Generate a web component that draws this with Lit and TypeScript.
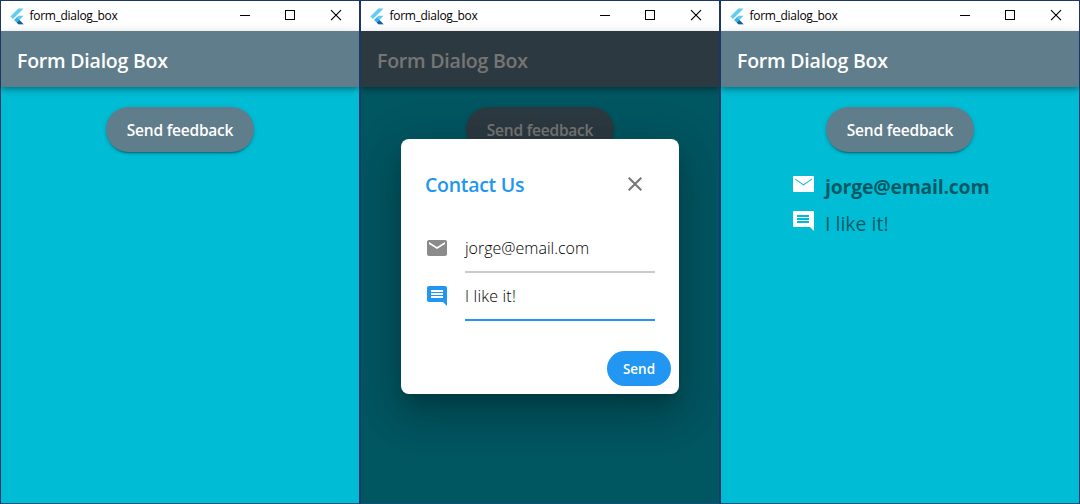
import { LitElement, html, css, svg, nothing } from "lit";
import { customElement, property } from "lit/decorators.js";

const MAIL = "M20 4H4c-1.1 0-1.99.9-1.99 2L2 18c0 1.1.9 2 2 2h16c1.1 0 2-.9 2-2V6c0-1.1-.9-2-2-2zm0 4l-8 5-8-5V6l8 5 8-5v2z";
const MAIL_SHARP = "M22 4H3Q2 4 2 5V19Q2 20 3 20H22Q23 20 23 19V5Q23 4 22 4zM21 7.6L12.5 13.6 4 7.6V6.4L12.5 12.3 21 6.4z";
const COMMENT = "M21.99 4c0-1.1-.89-2-1.99-2H4c-1.1 0-2 .9-2 2v12c0 1.1.9 2 2 2h14l4 4-.01-18zM18 14H6v-2h12v2zm0-3H6V9h12v2zm0-3H6V6h12v2z";
const COMMENT_SHARP = "M22 2H3Q2 2 2 3V17Q2 18 3 18H19L23 22V3Q23 2 22 2zM18 14H6v-2h12v2zm0-3H6V9h12v2zm0-3H6V6h12v2z";
const CLOSE = "M19 6.41L17.59 5 12 10.59 6.41 5 5 6.41 10.59 12 5 17.59 6.41 19 12 13.41 17.59 19 19 17.59 13.41 12z";

const icon = (d: string) => html`<svg class="icon" viewBox="0 0 24 24" width="24" height="24">${svg`<path d=${d} fill="currentColor"/>`}</svg>`;

@customElement("app-window")
class AppWindow extends LitElement {
  @property() mode = "start";

  static styles = css`
    :host { display: flex; flex-direction: column; box-sizing: border-box; border: 1px solid #1b3768; border-bottom-color: #105074; width: 360px; height: 504px; overflow: hidden; font-family: "Open Sans", "Noto Sans", sans-serif; }
    svg { display: block; flex: none; }
    .titlebar { display: flex; align-items: center; height: 30px; flex: none; background: #fff; color: #000; }
    .logo { margin-left: 9px; }
    .caption { flex: 1; margin-left: 5.5px; font-size: 12px; line-height: 30px; letter-spacing: -0.3px; white-space: nowrap; }
    .controls { display: flex; }
    .client { position: relative; display: flex; flex-direction: column; flex: 1; background: #00bcd4; }
    .appbar { height: 56px; flex: none; padding-left: 16px; box-sizing: border-box; background: #607d8b; color: #fff; box-shadow: 0 2px 4px -1px rgba(0,0,0,.2), 0 4px 5px rgba(0,0,0,.14), 0 1px 10px rgba(0,0,0,.12); }
    .heading { font-size: 19.5px; font-weight: 600; line-height: 60px; letter-spacing: -0.22px; white-space: nowrap; }
    .feedback { align-self: center; margin-top: 20px; width: 148px; height: 45px; border-radius: 23px; background: #607d8b; color: #fff; display: flex; justify-content: center; box-shadow: 0 3px 1px -2px rgba(0,0,0,.2), 0 2px 2px rgba(0,0,0,.14), 0 1px 5px rgba(0,0,0,.12); font-size: 15.5px; font-weight: 600; line-height: 46px; letter-spacing: -0.22px; white-space: nowrap; }
    .results { display: flex; flex-direction: column; margin: 20px 0 0 70px; color: rgba(0,0,0,.54); }
    .result { display: flex; height: 37px; white-space: nowrap; font-size: 19.5px; line-height: 30px; }
    .result .icon { color: #fff; }
    .result span { margin-left: 10px; }
    .mail { font-weight: 700; letter-spacing: -0.25px; }
    .barrier { position: absolute; inset: 0; display: flex; align-items: flex-start; justify-content: center; background: rgba(0,0,0,.54); padding-top: 108.5px; box-sizing: border-box; }
    .dialog { width: 278px; height: 255px; box-sizing: border-box; background: #fff; border-radius: 8px; padding: 0 24px; display: flex; flex-direction: column; box-shadow: 0 11px 15px -7px rgba(0,0,0,.2), 0 24px 38px 3px rgba(0,0,0,.14), 0 9px 46px 8px rgba(0,0,0,.12); }
    .barrier { padding-top: 108px; }
    .dialog-head { display: flex; justify-content: space-between; margin-top: 33px; height: 60px; padding-right: 8px; color: #757575; }
    .title { color: #2196f3; font-size: 19.5px; font-weight: 600; line-height: 26px; letter-spacing: -0.3px; white-space: nowrap; }
    .field { display: flex; height: 48px; color: #8b8b8b; }
    .field .icon { margin-top: 4px; }
    .value { flex: 1; height: 41px; margin-left: 16px; box-sizing: border-box; border-bottom: 2px solid #cacaca; color: #000; font-size: 16px; font-weight: 300; line-height: 32px; white-space: nowrap; }
    .field.active { color: #2196f3; }
    .field.active .value { border-color: #2196f3; letter-spacing: 0.2px; }
    .send { align-self: flex-end; width: 64px; height: 35px; margin: 23px -16px 0 0; border-radius: 18px; background: #2196f3; color: #fff; text-align: center; font-size: 13.5px; font-weight: 600; line-height: 37px; }
  `;

  render() {
    return html`
      <div class="titlebar">
        <svg class="logo" width="14" height="17" viewBox="0 0 14 17">
          <path d="M8.4 0.4H13.6L3 11 0.4 8.4z" fill="#62cbf7"/>
          <path d="M8.4 7.8H13.6L9.4 12 13.6 16.2H8.4L4.2 12z" fill="#62cbf7"/>
          <path d="M6.8 14.6L9.4 12 13.6 16.2H8.4z" fill="#1b5f9c"/>
          <path d="M4.2 12L6.8 9.4 9.4 12 6.8 14.6z" fill="#3eaee8"/>
        </svg>
        <span class="caption">form_dialog_box</span>
        <svg class="controls" width="121" height="30" viewBox="0 0 121 30" fill="none" stroke="#000" stroke-width="1">
          <path d="M2 14.5H12M47.5 9.5H56.5V18.5H47.5Z" shape-rendering="crispEdges"/>
          <path d="M93 9.2L103 19.2M103 9.2L93 19.2" stroke-width="1.2"/>
        </svg>
      </div>
      <div class="client">
        <div class="appbar"><span class="heading">Form Dialog Box</span></div>
        <div class="feedback"><span>Send feedback</span></div>
        ${this.mode === "result" ? html`
          <div class="results">
            <div class="result mail">${icon(MAIL_SHARP)}<span>jorge@email.com</span></div>
            <div class="result note">${icon(COMMENT_SHARP)}<span>I like it!</span></div>
          </div>` : nothing}
        ${this.mode === "dialog" ? html`
          <div class="barrier">
            <div class="dialog">
              <div class="dialog-head"><span class="title">Contact Us</span>${icon(CLOSE)}</div>
              <div class="field">${icon(MAIL)}<div class="value address">jorge@email.com</div></div>
              <div class="field active">${icon(COMMENT)}<div class="value">I like it!</div></div>
              <div class="send">Send</div>
            </div>
          </div>` : nothing}
      </div>`;
  }
}

@customElement("app-root")
class AppRoot extends LitElement {
  static styles = css`
    :host { display: flex; width: 1080px; height: 504px; overflow: hidden; }
  `;
  render() {
    return html`<app-window mode="start"></app-window><app-window mode="dialog"></app-window><app-window mode="result"></app-window>`;
  }
}
